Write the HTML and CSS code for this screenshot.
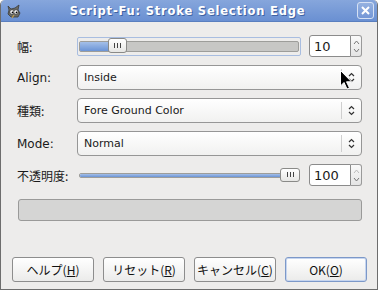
FILE: index.html
```html
<!DOCTYPE html>
<html lang="ja">
<head>
    <meta charset="UTF-8">
    <title>Script-Fu: Stroke Selection Edge</title>
    <link rel="stylesheet" href="styles.css">
</head>
<body>

    <div class="window">
        <!-- Barra de título -->
        <div class="titlebar">
            <svg class="app-icon" width="16" height="16" viewBox="0 0 16 16">
                <path d="M2 3 L5 6 L9 5 L13 2 L12 7 L14 10 L12 14 L5 14 L2 11 L3 7 Z" fill="#6b6b66" stroke="#3b3b38" stroke-width="0.8"/>
                <circle cx="6" cy="9" r="2.2" fill="#fff" stroke="#222" stroke-width="0.6"/>
                <circle cx="10" cy="9" r="2.2" fill="#fff" stroke="#222" stroke-width="0.6"/>
                <circle cx="6.5" cy="9.3" r="0.9" fill="#000"/>
                <circle cx="10.5" cy="9.3" r="0.9" fill="#000"/>
                <path d="M8 12 L6 15" stroke="#c9a24a" stroke-width="1.2"/>
            </svg>
            <span class="title">Script-Fu: Stroke Selection Edge</span>
            <span class="close-btn">
                <svg width="9" height="9" viewBox="0 0 9 9">
                    <path d="M1 1 L8 8 M8 1 L1 8" stroke="#fff" stroke-width="2"/>
                </svg>
            </span>
        </div>

        <div class="content">
            <div class="form">
                <!-- Ancho -->
                <label class="jp">幅:</label>
                <div class="slider-row">
                    <div class="scale focused">
                        <div class="trough">
                            <div class="fill" style="width: 14%"></div>
                        </div>
                        <span class="handle" style="left: 30px"><i></i><i></i><i></i></span>
                    </div>
                    <div class="spin">
                        <span class="spin-entry">10</span>
                        <span class="spin-arrows">
                            <svg width="7" height="5" viewBox="0 0 7 5"><path d="M1 4 L3.5 1 L6 4" fill="none" stroke="#777" stroke-width="1"/></svg>
                            <svg width="7" height="5" viewBox="0 0 7 5"><path d="M1 1 L3.5 4 L6 1" fill="none" stroke="#777" stroke-width="1"/></svg>
                        </span>
                    </div>
                </div>

                <!-- Alineación -->
                <label>Align:</label>
                <div class="combo">
                    <span>Inside</span>
                    <span class="combo-arrow">
                        <svg width="7" height="11" viewBox="0 0 7 11"><path d="M1 4 L3.5 1.5 L6 4 M1 7 L3.5 9.5 L6 7" fill="none" stroke="#333" stroke-width="1.2"/></svg>
                    </span>
                    <svg class="cursor" width="13" height="20" viewBox="0 0 13 20">
                        <path d="M0.5 0.5 L0.5 16 L4 12.5 L7 19 L9.5 18 L6.5 11.8 L11.5 11.8 Z" fill="#000" stroke="#fff" stroke-width="1"/>
                    </svg>
                </div>

                <!-- Tipo -->
                <label class="jp">種類:</label>
                <div class="combo">
                    <span>Fore Ground Color</span>
                    <span class="combo-arrow">
                        <svg width="7" height="11" viewBox="0 0 7 11"><path d="M1 4 L3.5 1.5 L6 4 M1 7 L3.5 9.5 L6 7" fill="none" stroke="#333" stroke-width="1.2"/></svg>
                    </span>
                </div>

                <!-- Modo -->
                <label>Mode:</label>
                <div class="combo">
                    <span>Normal</span>
                    <span class="combo-arrow">
                        <svg width="7" height="11" viewBox="0 0 7 11"><path d="M1 4 L3.5 1.5 L6 4 M1 7 L3.5 9.5 L6 7" fill="none" stroke="#333" stroke-width="1.2"/></svg>
                    </span>
                </div>

                <!-- Opacidad -->
                <label class="jp">不透明度:</label>
                <div class="slider-row">
                    <div class="scale">
                        <div class="trough thin">
                            <div class="fill" style="width: 100%"></div>
                        </div>
                        <span class="handle end"><i></i><i></i><i></i></span>
                    </div>
                    <div class="spin">
                        <span class="spin-entry">100</span>
                        <span class="spin-arrows">
                            <svg width="7" height="5" viewBox="0 0 7 5"><path d="M1 4 L3.5 1 L6 4" fill="none" stroke="#bbb" stroke-width="1"/></svg>
                            <svg width="7" height="5" viewBox="0 0 7 5"><path d="M1 1 L3.5 4 L6 1" fill="none" stroke="#777" stroke-width="1"/></svg>
                        </span>
                    </div>
                </div>
            </div>

            <!-- Barra de progreso -->
            <div class="progress"></div>

            <!-- Botones -->
            <div class="buttons">
                <button class="btn">ヘルプ(<u>H</u>)</button>
                <button class="btn">リセット(<u>R</u>)</button>
                <button class="btn">キャンセル(<u>C</u>)</button>
                <button class="btn default">OK(<u>O</u>)</button>
            </div>
        </div>
    </div>

</body>
</html>
```

FILE: styles.css
```css
body {
    margin: 0;
    padding: 0;
    background-color: #ffffff;
    font-family: "DejaVu Sans", "Noto Sans CJK JP", sans-serif;
    font-size: 11px;
    color: #1a1a1a;
}
.window {
    width: 376px;
    height: 289px;
    border: 1px solid #6d6d6d;
    border-top: none;
    border-radius: 5px 5px 0 0;
    background-color: #edeceb;
    display: flex;
    flex-direction: column;
    overflow: hidden;
}
.titlebar {
    height: 21px;
    display: flex;
    align-items: center;
    padding: 0 3px 0 5px;
    background: linear-gradient(#86a6dc, #6a90d2);
    border-bottom: 1px solid #5a7fbf;
    position: relative;
}
.app-icon {
    flex: none;
}
.title {
    flex: 1;
    text-align: center;
    font-weight: bold;
    font-size: 11.5px;
    color: #ffffff;
    letter-spacing: 0.8px;
    text-shadow: 1px 1px 0 #3f63a3;
    padding-right: 4px;
}
.close-btn {
    width: 15px;
    height: 15px;
    border: 1px solid #d6e1f4;
    border-radius: 3px;
    background: linear-gradient(#95b1e0, #7497d6);
    display: flex;
    align-items: center;
    justify-content: center;
}
.content {
    flex: 1;
    padding: 13px 15px 0 16px;
    display: flex;
    flex-direction: column;
}
.form {
    display: grid;
    grid-template-columns: 60px 1fr;
    row-gap: 8px;
    align-items: center;
}
label {
    font-size: 12px;
    color: #1a1a1a;
}
.jp {
    font-family: "Noto Sans CJK JP", sans-serif;
    font-size: 12px;
}
.slider-row {
    display: flex;
    align-items: center;
    gap: 8px;
    height: 22px;
}
.scale {
    flex: 1;
    position: relative;
    height: 17px;
    display: flex;
    align-items: center;
    border: 1px solid transparent;
    border-radius: 2px;
}
.scale.focused {
    border-color: #a8bde0;
}
.trough {
    flex: 1;
    margin: 0 1px;
    height: 9px;
    background: #c7c7c5;
    border: 1px solid #9d9d9a;
    border-radius: 2px;
    overflow: hidden;
}
.trough.thin {
    height: 3px;
    margin-right: 10px;
}
.fill {
    height: 100%;
    background: linear-gradient(#a4bfe8, #6b94d6);
}
.handle {
    position: absolute;
    top: 0;
    width: 19px;
    border: 1px solid #8a8a88;
    border-radius: 3px;
    background: linear-gradient(#ffffff, #e6e6e4);
    display: flex;
    align-items: center;
    justify-content: center;
    gap: 2px;
    box-sizing: border-box;
    height: 15px;
}
.handle.end {
    right: 0;
    top: 1px;
    width: 20px;
    height: 14px;
}
.handle i {
    width: 1px;
    height: 5px;
    background: #444;
}
.spin {
    display: flex;
    height: 22px;
}
.spin-entry {
    width: 36px;
    padding-left: 4px;
    background: #ffffff;
    border: 1px solid #8b8b8b;
    border-radius: 3px 0 0 3px;
    font-size: 13px;
    display: flex;
    align-items: center;
}
.spin-arrows {
    width: 10px;
    border: 1px solid #9a9a9a;
    border-left: none;
    border-radius: 0 3px 3px 0;
    background: linear-gradient(#fafafa, #e4e4e4);
    display: flex;
    flex-direction: column;
    align-items: center;
    justify-content: space-around;
    padding: 2px 0;
}
.combo {
    position: relative;
    height: 23px;
    border: 1px solid #969696;
    border-radius: 4px;
    background: linear-gradient(#ffffff, #f1f1f0);
    display: flex;
    align-items: center;
    padding-left: 6px;
    font-size: 11px;
}
.combo span:first-child {
    flex: 1;
}
.combo-arrow {
    width: 19px;
    height: 17px;
    border-left: 1px solid #cfcfcf;
    display: flex;
    align-items: center;
    justify-content: center;
}
.cursor {
    position: absolute;
    left: 262px;
    top: 4px;
}
.progress {
    margin-top: 13px;
    margin-left: 1px;
    height: 20px;
    background: #d5d5d4;
    border: 1px solid #9a9a99;
    border-radius: 3px;
}
.buttons {
    margin-top: 36px;
    margin-left: -5px;
    margin-right: -7px;
    display: flex;
    gap: 9px;
}
.btn {
    width: 82px;
    height: 25px;
    font-family: "Noto Sans CJK JP", sans-serif;
    font-size: 12px;
    color: #111;
    background: linear-gradient(#ffffff, #ebebea);
    border: 1px solid #8d8d8d;
    border-radius: 3px;
    padding: 0;
}
.btn.default {
    border-color: #7c98c8;
    box-shadow: inset 0 0 0 1px #c6d5ef;
}
```
